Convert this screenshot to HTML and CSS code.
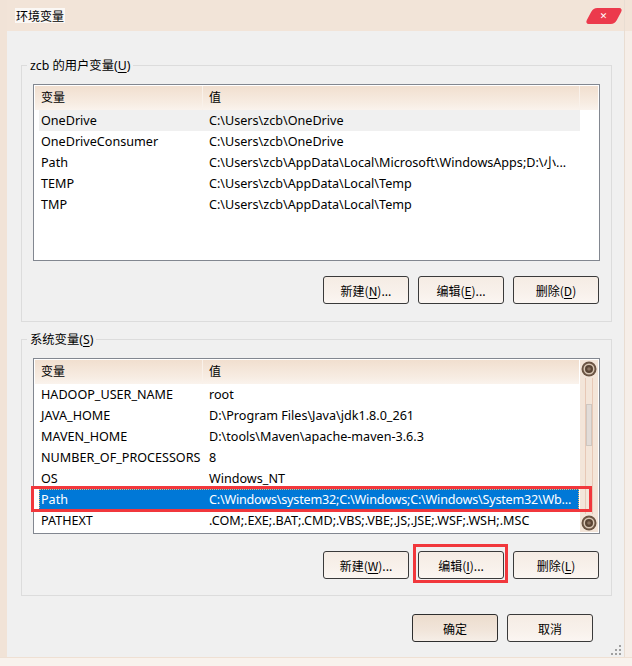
FILE: index.html
```html
<!DOCTYPE html>
<html lang="zh-CN">
<head>
<meta charset="utf-8">
<title>环境变量</title>
<link rel="stylesheet" href="styles.css">
</head>
<body>
<div class="screen">
  <div class="side side-left"></div>
  <div class="window">
    <div class="titlebar">
      <span class="title">环境变量</span>
      <span class="close"><span class="close-x">✕</span></span>
    </div>
    <div class="client">
      <fieldset class="group">
        <legend>zcb 的用户变量(<u>U</u>)</legend>
        <div class="list list-user">
          <div class="head">
            <div class="hcell hname">变量</div>
            <div class="hcell hval">值</div>
            <div class="hcell hextra"></div>
          </div>
          <div class="row sel-gray"><span class="c-name">OneDrive</span><span class="c-val">C:\Users\zcb\OneDrive</span></div>
          <div class="row"><span class="c-name">OneDriveConsumer</span><span class="c-val">C:\Users\zcb\OneDrive</span></div>
          <div class="row"><span class="c-name">Path</span><span class="c-val">C:\Users\zcb\AppData\Local\Microsoft\WindowsApps;D:\小...</span></div>
          <div class="row"><span class="c-name">TEMP</span><span class="c-val">C:\Users\zcb\AppData\Local\Temp</span></div>
          <div class="row"><span class="c-name">TMP</span><span class="c-val">C:\Users\zcb\AppData\Local\Temp</span></div>
        </div>
        <div class="btn-row">
          <button class="btn">新建(<u>N</u>)...</button>
          <button class="btn">编辑(<u>E</u>)...</button>
          <button class="btn">删除(<u>D</u>)</button>
        </div>
      </fieldset>

      <fieldset class="group group-sys">
        <legend>系统变量(<u>S</u>)</legend>
        <div class="list list-sys">
          <div class="list-main">
            <div class="head">
              <div class="hcell hname">变量</div>
              <div class="hcell hval hval-sys">值</div>
            </div>
            <div class="row"><span class="c-name">HADOOP_USER_NAME</span><span class="c-val">root</span></div>
            <div class="row"><span class="c-name">JAVA_HOME</span><span class="c-val">D:\Program Files\Java\jdk1.8.0_261</span></div>
            <div class="row"><span class="c-name">MAVEN_HOME</span><span class="c-val">D:\tools\Maven\apache-maven-3.6.3</span></div>
            <div class="row"><span class="c-name">NUMBER_OF_PROCESSORS</span><span class="c-val">8</span></div>
            <div class="row"><span class="c-name">OS</span><span class="c-val">Windows_NT</span></div>
            <div class="row sel-blue"><span class="c-name">Path</span><span class="c-val c-tight">C:\Windows\system32;C:\Windows;C:\Windows\System32\Wb...</span><span class="annot annot-row"></span></div>
            <div class="row"><span class="c-name">PATHEXT</span><span class="c-val">.COM;.EXE;.BAT;.CMD;.VBS;.VBE;.JS;.JSE;.WSF;.WSH;.MSC</span></div>
          </div>
          <div class="scrollbar">
            <svg class="sb-btn" width="16" height="16" viewBox="0 0 16 16"><circle cx="8" cy="8" r="7.5" fill="#6b5443"/><circle cx="8" cy="8" r="5.5" fill="#d8c6b4"/><circle cx="8" cy="8" r="4" fill="#5a4434"/><circle cx="8" cy="8" r="1.8" fill="#8a7260"/></svg>
            <div class="sb-track">
              <div class="sb-thumb"></div>
            </div>
            <svg class="sb-btn" width="16" height="16" viewBox="0 0 16 16"><circle cx="8" cy="8" r="7.5" fill="#6b5443"/><circle cx="8" cy="8" r="5.5" fill="#d8c6b4"/><circle cx="8" cy="8" r="4" fill="#5a4434"/><circle cx="8" cy="8" r="1.8" fill="#8a7260"/></svg>
          </div>
        </div>
        <div class="btn-row btn-row-sys">
          <button class="btn">新建(<u>W</u>)...</button>
          <span class="btn-wrap"><button class="btn">编辑(<u>I</u>)...</button><span class="annot annot-btn"></span></span>
          <button class="btn">删除(<u>L</u>)</button>
        </div>
      </fieldset>

      <div class="dialog-btns">
        <button class="btn btn-default">确定</button>
        <button class="btn">取消</button>
      </div>

      <svg class="grip" width="10" height="10" viewBox="0 0 10 10"><g fill="#a0a0a0"><rect x="8" y="0" width="2" height="2"/><rect x="4" y="4" width="2" height="2"/><rect x="8" y="4" width="2" height="2"/><rect x="0" y="8" width="2" height="2"/><rect x="4" y="8" width="2" height="2"/><rect x="8" y="8" width="2" height="2"/></g></svg>
    </div>
  </div>
  <div class="side side-right"></div>
</div>
<div class="bottom-strip"></div>
</body>
</html>
```

FILE: styles.css
```css
* { box-sizing: border-box; }
html, body { margin: 0; padding: 0; }
body {
  width: 632px;
  height: 666px;
  overflow: hidden;
  background: #f2e4d8;
  font-family: "Noto Sans", "Noto Sans CJK SC", sans-serif;
  font-size: 12px;
  color: #000;
}
.screen {
  display: flex;
  height: 657px;
}
.side { flex: none; height: 100%; }
.side-left { width: 7px; background: #f1e3d7; }
.side-right {
  width: 8px;
  background: linear-gradient(#f2e4d8 0, #f2e4d8 31px, #f6eee8 31px);
  border-left: 1px solid #e9ddd2;
}
.window {
  width: 617px;
  display: flex;
  flex-direction: column;
}
.titlebar {
  height: 31px;
  display: flex;
  align-items: center;
  justify-content: space-between;
  padding: 0 4px 0 8px;
  background: #f2e4d8;
}
.title {
  font-family: "Noto Sans CJK SC", sans-serif;
  font-size: 12px;
  line-height: 15px;
  background: #fbf8f5;
  padding: 0 1px;
}
.close {
  width: 30px;
  height: 16px;
  margin-right: 1px;
  margin-top: 1px;
  background: #ec3a4c;
  border-radius: 4px;
  transform: skewX(-28deg);
  display: flex;
  align-items: center;
  justify-content: center;
}
.close-x {
  transform: skewX(28deg);
  color: #fff;
  font-size: 9px;
  font-weight: bold;
  line-height: 1;
  font-family: "DejaVu Sans", sans-serif;
}
.client {
  position: relative;
  height: 626px;
  background: #f0f0f0;
  padding-top: 26px;
}
.group {
  margin: 0 12px 0 14px;
  padding: 10px 11px 17px 11px;
  border: 1px solid #dcdcdc;
  min-width: 0;
}
.group-sys { margin-top: 9px; padding-bottom: 16px; }
legend {
  padding: 0 3px;
  margin-left: -6px;
  line-height: 17px;
  font-family: "Noto Sans", "Noto Sans CJK SC", sans-serif;
  font-size: 12.3px;
}
u { text-decoration-thickness: 1px; text-underline-offset: 2px; }

.list {
  background: #fff;
  border: 1px solid #828790;
  padding: 1px;
  height: 177px;
}
.list-sys {
  height: 176px;
  display: flex;
  gap: 1px;
}
.list-main { flex: 1; min-width: 0; }
.head {
  display: flex;
  height: 24px;
}
.hcell {
  height: 24px;
  line-height: 24px;
  padding-left: 6px;
  background: linear-gradient(#f1dfcf, #f7ece2 70%, #faf3ed);
  white-space: nowrap;
}
.hname { width: 168px; border-right: 1px solid #f9f1ea; }
.hval { width: 377px; border-right: 1px solid #f9f1ea; }
.hval-sys { flex: 1; width: auto; border-right: none; }
.hextra { flex: 1; padding: 0; }

.row {
  position: relative;
  display: flex;
  height: 21px;
  line-height: 21px;
  margin-left: 4px;
  width: 541px;
  white-space: nowrap;
  font-size: 12.6px;
}
.list-sys .row { width: auto; }
.c-name { width: 168px; flex: none; padding-left: 2px; overflow: hidden; }
.c-val { flex: 1; min-width: 0; padding-left: 2px; overflow: hidden; }
.c-tight { letter-spacing: -0.2px; }
.sel-gray { background: #f0f0f0; }
.sel-blue {
  background: #0078d7;
  color: #fff;
  outline: 1px dotted #e9b870;
  outline-offset: -1px;
}
.annot {
  position: absolute;
  border: 3px solid #f1373c;
  pointer-events: none;
}
.annot-row { left: -8px; top: -3px; width: 561px; height: 26px; }

.scrollbar {
  width: 18px;
  flex: none;
  display: flex;
  flex-direction: column;
  align-items: center;
  background: #f3e5d9;
  padding: 1px 0;
}
.sb-btn { flex: none; display: block; }
.sb-track {
  flex: 1;
  width: 8px;
  margin: 1px 0;
  border-left: 1px solid #e7c8b6;
  border-right: 1px solid #e7c8b6;
  padding-top: 26px;
}
.sb-thumb {
  width: 6px;
  height: 42px;
  background: #e2dcd8;
  border: 1px solid #cfc7c0;
}

.btn-row {
  display: flex;
  justify-content: flex-end;
  gap: 9px;
  margin-top: 15px;
  margin-right: 1px;
}
.btn-row-sys { margin-top: 17px; }
.btn {
  width: 86px;
  height: 28px;
  padding: 0;
  border: 1px solid #3a3a3a;
  border-radius: 3px;
  background: linear-gradient(#f5ece4, #f8f1eb 60%, #fbf6f2);
  font-family: "Noto Sans CJK SC", "Noto Sans", sans-serif;
  font-size: 12px;
  color: #000;
  display: flex;
  align-items: center;
  justify-content: center;
}
.btn-wrap { position: relative; display: flex; }
.annot-btn { left: -5px; top: -7px; right: -4px; bottom: -4px; }

.dialog-btns {
  display: flex;
  justify-content: flex-end;
  gap: 9px;
  margin: 18px 31px 0 0;
}
.btn-default {
  background: linear-gradient(#ecdccd, #f1e5da 60%, #f6eee7);
  border-color: #2e2e2e;
}
.grip { position: absolute; right: 3px; bottom: 2px; }

.bottom-strip {
  height: 9px;
  background: #f8f2ed;
  border-top: 1px solid #efe0d3;
}
```
